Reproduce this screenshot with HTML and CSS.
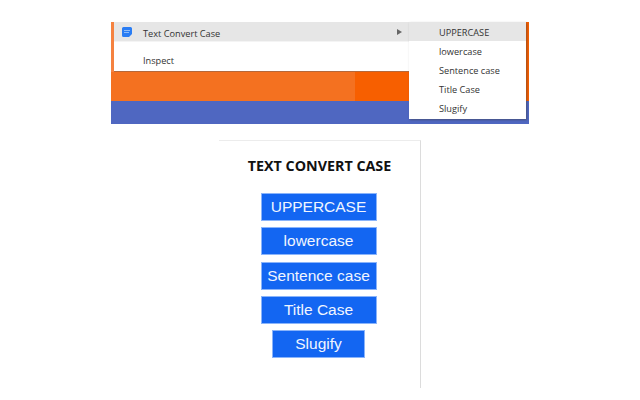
FILE: index.html
```html
<!DOCTYPE html>
<html lang="en">
<head>
<meta charset="utf-8">
<title>Text Convert Case</title>
<link rel="stylesheet" href="styles.css">
</head>
<body>
<div class="shot">
  <div class="page">
    <div class="menu">
      <div class="item item-active">
        <svg class="ext-icon" width="10" height="10" viewBox="0 0 10 10"><path d="M1.5 0h7A1.5 1.5 0 0 1 10 1.5V7L7 10H1.5A1.5 1.5 0 0 1 0 8.500V1.500A1.500 1.500 0 0 1 1.500 0z" fill="#2a7df4"/><path d="M2 3.500h6M2 5.500h5" stroke="#8fbdf9" stroke-width="1" fill="none"/></svg>
        <span class="label">Text Convert Case</span>
        <span class="arrow"></span>
      </div>
      <div class="sep"></div>
      <div class="item item-plain"><span class="label">Inspect</span></div>
    </div>
    <div class="orange"><div class="orange-dark"></div></div>
  </div>
  <div class="blue"></div>
  <div class="submenu">
    <div class="sub sub-active">UPPERCASE</div>
    <div class="sub">lowercase</div>
    <div class="sub">Sentence case</div>
    <div class="sub">Title Case</div>
    <div class="sub">Slugify</div>
  </div>
</div>
<div class="panel">
  <h1 class="title">TEXT CONVERT CASE</h1>
  <div class="buttons">
    <button class="btn">UPPERCASE</button>
    <button class="btn">lowercase</button>
    <button class="btn">Sentence case</button>
    <button class="btn">Title Case</button>
    <button class="btn btn-small">Slugify</button>
  </div>
</div>
</body>
</html>
```
FILE: styles.css
```css
html, body { margin: 0; padding: 0; background: #fff; }
body { width: 640px; height: 400px; overflow: hidden; padding-top: 22px; box-sizing: border-box; }
.shot { position: relative; width: 418px; margin-left: 111px; }
.page { background: linear-gradient(to right, #f58240 0 3px, #f47120 3px); padding-left: 3px; padding-right: 3px; position: relative; }
.menu { background: #fff; height: 49px; border-bottom: 1px solid #b5683a; font-family: "Open Sans", "Noto Sans", sans-serif; font-size: 9.2px; color: #333; }
.item { height: 19px; display: flex; align-items: center; box-sizing: border-box; padding-top: 3px; }
.item-active { background: #e6e6e6; }
.ext-icon { margin: -3px 11px 0 8px; flex: none; }
.item-plain .label { margin-left: 29px; }
.arrow { margin: -3px 124px 0 auto; width: 0; height: 0; border-left: 5px solid #666; border-top: 3.5px solid transparent; border-bottom: 3.5px solid transparent; }
.sep { height: 5px; background: linear-gradient(#f4f4f4 0 1px, #fff 1px); }
.item-plain { height: 25px; }
.orange { height: 29px; margin: 0 -3px; position: relative; background: #f47120; }
.orange-dark { position: absolute; left: 244px; right: 0; top: 0; bottom: 0; background: #f75f00; }
.page::after { content: ""; position: absolute; right: 0; top: 0; width: 3px; height: 50px; background: #f75f00; }
.blue { height: 23px; background: #4f67c1; }
.submenu { position: absolute; left: 298px; top: 0; width: 117px; height: 97px; background: #fff; box-shadow: 1px 1px 2px rgba(60,60,60,.5); font-family: "Open Sans", "Noto Sans", sans-serif; font-size: 9.2px; color: #333; }
.sub { height: 19px; line-height: 21px; padding-left: 30px; }
.sub-active { background: #e6e6e6; }
.panel { margin: 16px 0 0 219px; width: 202px; height: 248px; box-sizing: border-box; border-top: 1px solid #ececec; border-right: 1px solid #dcdcdc; display: flex; flex-direction: column; align-items: center; padding-right: 2px; }
.title { margin: 15px 0 0; font-family: "Open Sans", "Noto Sans", sans-serif; font-size: 14.3px; line-height: 20px; font-weight: 700; color: #111; white-space: nowrap; padding-left: 2px; }
.buttons { display: flex; flex-direction: column; align-items: center; gap: 6.25px; margin-top: 17px; }
.btn { width: 116px; height: 28px; padding: 0; border: 1px solid #8ab4fa; background: #1366f2; color: #f0f5ff; font-family: "Liberation Sans", Arial, sans-serif; font-size: 15.5px; line-height: 26px; border-radius: 0; }
.btn-small { width: 93px; }
```
